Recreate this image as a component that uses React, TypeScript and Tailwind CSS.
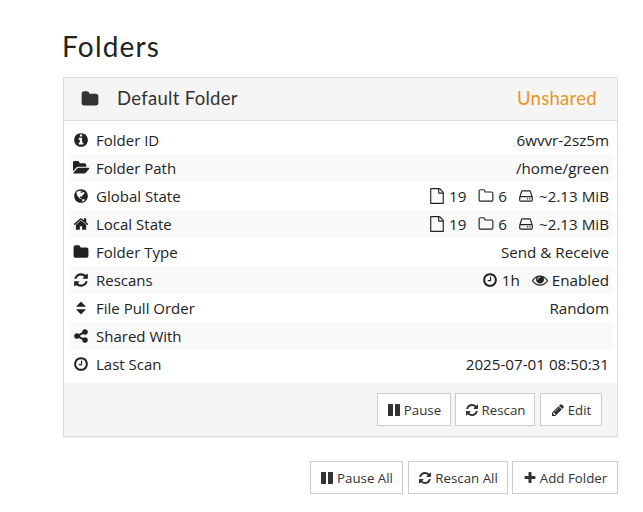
import React from "react";

const P = {
  folder: "M1728 608v704q0 92-66 158t-158 66h-1216q-92 0-158-66t-66-158v-960q0-92 66-158t158-66h320q92 0 158 66t66 158v32h672q92 0 158 66t66 158z",
  info: "M1152 1376v-160q0-14-9-23t-23-9h-96v-512q0-14-9-23t-23-9h-320q-14 0-23 9t-9 23v160q0 14 9 23t23 9h96v320h-96q-14 0-23 9t-9 23v160q0 14 9 23t23 9h448q14 0 23-9t9-23zm-128-896v-160q0-14-9-23t-23-9h-192q-14 0-23 9t-9 23v160q0 14 9 23t23 9h192q14 0 23-9t9-23zm640 416q0 209-103 385.5t-279.5 279.5-385.5 103-385.5-103-279.5-279.5-103-385.5 103-385.5 279.5-279.5 385.5-103 385.5 103 279.5 279.5 103 385.5z",
  open: "M1845 931q0 35-35 73l-336 396q-43 51-120.5 86.5t-143.5 35.5h-1088q-34 0-60.5-13t-26.5-43q0-35 35-73l336-396q43-51 120.5-86.5t143.5-35.5h1088q34 0 60.5 13t26.5 43zm-343-345v160h-832q-94 0-197 47.5t-164 119.5l-337 396-5 6q0-4-.5-12.5t-.5-12.5v-960q0-92 66-158t158-66h320q92 0 158 66t66 158v32h544q92 0 158 66t66 158z",
  globe: "M896 128q209 0 385.5 103t279.5 279.5 103 385.5-103 385.5-279.5 279.5-385.5 103-385.5-103-279.5-279.5-103-385.5 103-385.5 279.5-279.5 385.5-103zm274 521q-2 1-9.5 9.5t-13.5 9.5q2 0 4.5-5t5-11 3.5-7q6-7 22-15 14-6 52-12 34-8 51 11-2-2 9.5-13t14.5-12q3-2 15-4.5t15-7.5l2-22q-12 1-17.5-7t-6.5-21q0 2-6 8 0-7-4.5-8t-11.5 1-9 1q-10-3-15-7.5t-8-16.5-4-15q-2-5-9.5-11t-9.5-10q-1-2-2.5-5.5t-3-6.5-4-5.5-5.5-2.5-7 5-7.5 10-4.5 5q-3-2-6-1.5t-4.5 1-4.5 3-5 3.5q-3 2-8.5 3t-8.5 2q15-5-1-11-10-4-16-3 9-4 7.5-12t-8.5-14h5q-1-4-8.5-8.5t-17.5-8.5-13-6q-8-5-34-9.5t-33-.5q-5 6-4.5 10.5t4 14 3.5 12.5q1 6-5.5 13t-6.5 12q0 7 14 15.5t10 21.5q-3 8-16 16t-16 12q-5 8-1.5 18.5t10.5 16.5q2 2 1.5 4t-3.5 4.5-5.5 4-6.5 3.5l-3 2q-11 5-20.5-6t-13.5-26q-7-25-16-30-23-8-29 1-5-13-41-26-25-9-58-4 6-1 0-15-7-15-19-12 3-6 4-17.5t1-13.5q3-13 12-23 1-1 7-8.5t9.5-13.5.5-6q35 4 50-11 5-5 11.5-17t10.5-17q9-6 14-5.5t14.5 5.5 14.5 5q14 1 15.5-11t-7.5-20q12 1 3-17-4-7-8-9-12-4-27 5-8 4 2 8-1-1-9.5 10.5t-16.5 17.5-16-5q-1-1-5.5-13.5t-9.5-13.5q-8 0-16 15 3-8-11-15t-24-8q19-12-8-27-7-4-20.5-5t-19.5 4q-5 7-5.5 11.5t5 8 10.5 5.5 11.5 4 8.5 3q14 10 8 14-2 1-8.5 3.5t-11.5 4.5-6 4q-3 4 0 14t-2 14q-5-5-9-17.5t-7-16.5q7 9-25 6l-10-1q-4 0-16 2t-20.5 1-13.5-8q-4-8 0-20 1-4 4-2-4-3-11-9.5t-10-8.5q-46 15-94 41 6 1 12-1 5-2 13-6.5t10-5.5q34-14 42-7l5-5q14 16 20 25-7-4-30-1-20 6-22 12 7 12 5 18-4-3-11.5-10t-14.5-11-15-5q-16 0-22 1-146 80-235 222 7 7 12 8 4 1 5 9t2.5 11 11.5-3q9 8 3 19 1-1 44 27 19 17 21 21 3 11-10 18-1-2-9-9t-9-4q-3 5 .5 18.5t10.5 12.5q-7 0-9.5 16t-2.5 35.5-1 23.5l2 1q-3 12 5.5 34.5t21.5 19.5q-13 3 20 43 6 8 8 9 3 2 12 7.5t15 10 10 10.5q4 5 10 22.5t14 23.5q-2 6 9.5 20t10.5 23q-1 0-2.5 1t-2.5 1q3 7 15.5 14t15.5 13q1 3 2 10t3 11 8 2q2-20-24-62-15-25-17-29-3-5-5.5-15.5t-4.5-14.5q2 0 6 1.5t8.5 3.5 7.5 4 2 3q-3 7 2 17.5t12 18.5 17 19 12 13q6 6 14 19.5t0 13.5q9 0 20 10.5t17 19.5q5 8 8 26t5 24q2 7 8.5 13.5t12.5 9.5l16 8 13 7q5 2 18.5 10.5t21.5 11.5q10 4 16 4t14.5-2.5 13.5-3.5q15-2 29 15t21 21q36 19 55 11-2 1 .5 7.5t8 15.5 9 14.5 5.5 8.5q5 6 18 15t18 15q6-4 7-9-3 8 7 20t18 10q14-3 14-32-31 15-49-18 0-1-2.5-5.5t-4-8.5-2.5-8.5 0-7.5 5-3q9 0 10-3.5t-2-12.5-4-13q-1-8-11-20t-12-15q-5 9-16 8t-16-9q0 1-1.5 5.5t-1.5 6.5q-13 0-15-1 1-3 2.5-17.5t3.5-22.5q1-4 5.5-12t7.5-14.5 4-12.5-4.5-9.5-17.5-2.5q-19 1-26 20-1 3-3 10.5t-5 11.5-9 7q-7 3-24 2t-24-5q-13-8-22.5-29t-9.5-37q0-10 2.5-26.5t3-25-5.5-24.5q3-2 9-9.5t10-10.5q2-1 4.5-1.5t4.5 0 4-1.5 3-6q-1-1-4-3-3-3-4-3 7 3 28.5-1.5t27.5 1.5q15 11 22-2 0-1-2.5-9.5t-.5-13.5q5 27 29 9 3 3 15.5 5t17.5 5q3 2 7 5.5t5.5 4.5 5-.5 8.5-6.5q10 14 12 24 11 40 19 44 7 3 11 2t4.5-9.5 0-14-1.5-12.5l-1-8v-18l-1-8q-15-3-18.5-12t1.5-18.5 15-18.5q1-1 8-3.5t15.5-6.5 12.5-8q21-19 15-35 7 0 11-9-1 0-5-3t-7.5-5-4.5-2q9-5 2-16 5-3 7.5-11t7.5-10q9 12 21 2 8-8 1-16 5-7 20.5-10.5t18.5-9.5q7 2 8-2t1-12 3-12q4-5 15-9t13-5l17-11q3-4 0-4 18 2 31-11 10-11-6-20 3-6-3-9.5t-15-5.5q3-1 11.5-.5t10.5-1.5q15-10-7-16-17-5-43 12zm-163 877q206-36 351-189-3-3-12.5-4.5t-12.5-3.5q-18-7-24-8 1-7-2.5-13t-8-9-12.5-8-11-7q-2-2-7-6t-7-5.5-7.5-4.5-8.5-2-10 1l-3 1q-3 1-5.5 2.5t-5.5 3-4 3 0 2.5q-21-17-36-22-5-1-11-5.5t-10.5-7-10-1.5-11.5 7q-5 5-6 15t-2 13q-7-5 0-17.5t2-18.5q-3-6-10.5-4.5t-12 4.5-11.5 8.5-9 6.5-8.5 5.5-8.5 7.5q-3 4-6 12t-5 11q-2-4-11.5-6.5t-9.5-5.5q2 10 4 35t5 38q7 31-12 48-27 25-29 40-4 22 12 26 0 7-8 20.5t-7 21.5q0 6 2 16z",
  home: "M1472 992v480q0 26-19 45t-45 19h-384v-384h-256v384h-384q-26 0-45-19t-19-45v-480q0-1 .5-3t.5-3l575-474 575 474q1 2 1 6zm223-69l-62 74q-8 9-21 11h-3q-13 0-21-7l-692-577-692 577q-12 8-24 7-13-2-21-11l-62-74q-8-10-7-23.5t11-21.5l719-599q32-26 76-26t76 26l244 204v-195q0-14 9-23t23-9h192q14 0 23 9t9 23v408l219 182q10 8 11 21.5t-7 23.5z",
  refresh: "M1639 1056q0 5-1 7-64 268-268 434.5t-478 166.5q-146 0-282.5-55t-243.5-157l-129 129q-19 19-45 19t-45-19-19-45v-448q0-26 19-45t45-19h448q26 0 45 19t19 45-19 45l-137 137q71 66 161 102t187 36q134 0 250-65t186-179q11-17 53-117 8-23 30-23h192q13 0 22.5 9.5t9.5 22.5zm25-800v448q0 26-19 45t-45 19h-448q-26 0-45-19t-19-45 19-45l138-138q-148-137-349-137-134 0-250 65t-186 179q-11 17-53 117-8 23-30 23h-199q-13 0-22.5-9.5t-9.5-22.5v-7q65-268 270-434.5t480-166.5q146 0 284 55.5t245 156.5l130-129q19-19 45-19t45 19 19 45z",
  sort: "M1408 1088q0 26-19 45l-448 448q-19 19-45 19t-45-19l-448-448q-19-19-19-45t19-45 45-19h896q26 0 45 19t19 45zm0-384q0 26-19 45t-45 19h-896q-26 0-45-19t-19-45 19-45l448-448q19-19 45-19t45 19l448 448q19 19 19 45z",
  share: "M1344 1024q133 0 226.5 93.5t93.5 226.5-93.5 226.5-226.5 93.5-226.5-93.5-93.5-226.5q0-12 2-34l-360-180q-92 86-218 86-133 0-226.5-93.5t-93.5-226.5 93.5-226.5 226.5-93.5q126 0 218 86l360-180q-2-22-2-34 0-133 93.5-226.5t226.5-93.5 226.5 93.5 93.5 226.5-93.5 226.5-226.5 93.5q-126 0-218-86l-360 180q2 22 2 34t-2 34l360 180q92-86 218-86z",
  clock: "M1024 544v448q0 14-9 23t-23 9h-320q-14 0-23-9t-9-23v-64q0-14 9-23t23-9h224v-352q0-14 9-23t23-9h64q14 0 23 9t9 23zm416 352q0-148-73-273t-198-198-273-73-273 73-198 198-73 273 73 273 198 198 273 73 273-73 198-198 73-273zm224 0q0 209-103 385.5t-279.5 279.5-385.5 103-385.5-103-279.5-279.5-103-385.5 103-385.5 279.5-279.5 385.5-103 385.5 103 279.5 279.5 103 385.5z",
  file: "M1596 380q28 28 48 76t20 88v1152q0 40-28 68t-68 28h-1344q-40 0-68-28t-28-68v-1600q0-40 28-68t68-28h896q40 0 88 20t76 48zm-444-244v376h376q-10-29-22-41l-313-313q-12-12-41-22zm384 1528v-1024h-416q-40 0-68-28t-28-68v-416h-768v1536h1280z",
  folderO: "M1600 1312v-704q0-40-28-68t-68-28h-704q-40 0-68-28t-28-68v-64q0-40-28-68t-68-28h-320q-40 0-68 28t-28 68v960q0 40 28 68t68 28h1216q40 0 68-28t28-68zm128-704v704q0 92-66 158t-158 66h-1216q-92 0-158-66t-66-158v-960q0-92 66-158t158-66h320q92 0 158 66t66 158v32h672q92 0 158 66t66 158z",
  hdd: "M1040 1216q0 33-23.5 56.5t-56.5 23.5-56.5-23.5-23.5-56.5 23.5-56.5 56.5-23.5 56.5 23.5 23.5 56.5zm256 0q0 33-23.5 56.5t-56.5 23.5-56.5-23.5-23.5-56.5 23.5-56.5 56.5-23.5 56.5 23.5 23.5 56.5zm128 160v-320q0-13-9.5-22.5t-22.5-9.5h-1216q-13 0-22.5 9.5t-9.5 22.5v320q0 13 9.5 22.5t22.5 9.5h1216q13 0 22.5-9.5t9.5-22.5zm-1230-480h1180l-157-482q-4-13-16-21.5t-26-8.5h-782q-14 0-26 8.5t-16 21.5zm1358 160v320q0 66-47 113t-113 47h-1216q-66 0-113-47t-47-113v-320q0-25 16-75l197-606q17-53 63-86t101-33h782q55 0 101 33t63 86l197 606q16 50 16 75z",
  eye: "M1664 960q-152-236-381-353 61 104 61 225 0 185-131.5 316.5t-316.5 131.5-316.5-131.5-131.5-316.5q0-121 61-225-229 117-381 353 133 205 333.5 326.5t434.5 121.5 434.5-121.5 333.5-326.5zm-720-384q0-20-14-34t-34-14q-125 0-214.5 89.5t-89.5 214.5q0 20 14 34t34 14 34-14 14-34q0-86 61-147t147-61q20 0 34-14t14-34zm848 384q0 34-20 69-140 230-376.5 368.5t-499.5 138.5-499.5-139-376.5-368q-20-35-20-69t20-69q140-229 376.5-368t499.5-139 499.5 139 376.5 368q20 35 20 69z",
  pause: "M1664 192v1408q0 26-19 45t-45 19h-512q-26 0-45-19t-19-45v-1408q0-26 19-45t45-19h512q26 0 45 19t19 45zm-896 0v1408q0 26-19 45t-45 19h-512q-26 0-45-19t-19-45v-1408q0-26 19-45t45-19h512q26 0 45 19t19 45z",
  pencil: "M491 1536l91-91-235-235-91 91v107h128v128h107zm523-928q0-22-22-22-10 0-17 7l-542 542q-7 7-7 17 0 22 22 22 10 0 17-7l542-542q7-7 7-17zm-54-192l416 416-832 832h-416v-416zm683 96q0 53-37 90l-166 166-416-416 166-165q36-38 90-38 53 0 91 38l235 234q37 39 37 91z",
  plus: "M1600 736v192q0 40-28 68t-68 28h-416v416q0 40-28 68t-68 28h-192q-40 0-68-28t-28-68v-416h-416q-40 0-68-28t-28-68v-192q0-40 28-68t68-28h416v-416q0-40 28-68t68-28h192q40 0 68 28t28 68v416h416q40 0 68 28t28 68z",
};

function Icon({ d, className, vb = "0 0 1792 1792" }: { d: string; className: string; vb?: string }) {
  return (
    <svg viewBox={vb} className={`shrink-0 fill-current ${className}`} aria-hidden="true">
      <path d={d} />
    </svg>
  );
}

function Stat({ icon, text }: { icon: React.ReactNode; text: string }) {
  return (
    <span className="flex items-center gap-[4px]">
      {icon}
      <span>{text}</span>
    </span>
  );
}

function State() {
  return (
    <span className="flex items-center gap-[12px]">
      <Stat icon={<Icon d={P.file} className="w-[16px] h-[16px]" />} text="19" />
      <Stat icon={<Icon d={P.folderO} className="w-[16px] h-[16px]" />} text="6" />
      <Stat icon={<Icon d={P.hdd} className="w-[16px] h-[16px]" />} text="~2.13 MiB" />
    </span>
  );
}

const rows: { icon: React.ReactNode; label: string; value: React.ReactNode }[] = [
  { icon: <Icon d={P.info} className="w-[16px] h-[16px]" />, label: "Folder ID", value: "6wvvr-2sz5m" },
  { icon: <Icon d={P.open} vb="0 0 1920 1792" className="w-[17px] h-[16px]" />, label: "Folder Path", value: "/home/green" },
  { icon: <Icon d={P.globe} className="w-[16px] h-[16px]" />, label: "Global State", value: <State /> },
  { icon: <Icon d={P.home} className="w-[16px] h-[16px]" />, label: "Local State", value: <State /> },
  { icon: <Icon d={P.folder} className="w-[16px] h-[16px]" />, label: "Folder Type", value: "Send & Receive" },
  { icon: <Icon d={P.refresh} className="w-[16px] h-[16px]" />, label: "Rescans", value: (
    <span className="flex items-center gap-[12px]">
      <Stat icon={<Icon d={P.clock} className="w-[16px] h-[16px]" />} text="1h" />
      <Stat icon={<Icon d={P.eye} className="w-[16px] h-[16px]" />} text="Enabled" />
    </span>
  ) },
  { icon: <Icon d={P.sort} className="w-[16px] h-[16px]" />, label: "File Pull Order", value: "Random" },
  { icon: <Icon d={P.share} className="w-[16px] h-[16px]" />, label: "Shared With", value: "" },
  { icon: <Icon d={P.clock} className="w-[16px] h-[16px]" />, label: "Last Scan", value: "2025-07-01 08:50:31" },
];

function Btn({ d, text, className }: { d: string; text: string; className: string }) {
  return (
    <button className={`h-[33px] flex items-center justify-center gap-[3px] bg-white border border-[#cccccc] text-[13.3px] text-[#333333] ${className}`}>
      <Icon d={d} className="w-[14px] h-[14px]" />
      <span className="pt-[2px]">{text}</span>
    </button>
  );
}

export default function App() {
  return (
    <div className="min-h-[512px] bg-white text-[#222222] overflow-hidden font-['Open_Sans',sans-serif]">
      <div className="ml-[63px] w-[555px] pt-[29px]">
        <h1 className="text-[28px] leading-[34px] h-[48px] -ml-[1px] tracking-[1.2px] text-[#222222] font-['Lato',sans-serif]">Folders</h1>
        <div className="border border-[#dddddd] bg-[#f5f5f5] shadow-[0_1px_1px_rgba(0,0,0,0.05)]">
          <div className="h-[43px] border-b border-[#dddddd] flex items-center pl-[17px] pr-[20px] text-[18.5px] tracking-[0.3px] text-[#333333] font-['Lato',sans-serif]">
            <Icon d={P.folder} className="w-[18px] h-[18px]" />
            <span className="ml-[18px]">Default Folder</span>
            <span className="ml-auto text-[#e6952a]">Unshared</span>
          </div>
          <div className="bg-white p-[5px] h-[262px]">
            {rows.map((r, i) => (
              <div key={r.label} className={`h-[28px] flex items-center pl-[4px] pr-[3px] ${i % 2 === 1 ? "bg-[#f9f9f9]" : ""}`}>
                <span className="w-[16px] flex justify-center">{r.icon}</span>
                <span className="ml-[7px] pt-[1px] text-[15px]">{r.label}</span>
                <span className="ml-auto pt-[1px] text-[15.2px]">{r.value}</span>
              </div>
            ))}
          </div>
          <div className="h-[53px] flex items-center justify-end gap-[4px] pr-[15px]">
            <Btn className="w-[74px]" d={P.pause} text="Pause" />
            <Btn className="w-[80px] mr-[1px]" d={P.refresh} text="Rescan" />
            <Btn className="w-[62px]" d={P.pencil} text="Edit" />
          </div>
        </div>
        <div className="mt-[24px] flex justify-end gap-[4px]">
          <Btn className="w-[93px] mr-[1px]" d={P.pause} text="Pause All" />
          <Btn className="w-[100px]" d={P.refresh} text="Rescan All" />
          <Btn className="w-[106px]" d={P.plus} text="Add Folder" />
        </div>
      </div>
    </div>
  );
}
